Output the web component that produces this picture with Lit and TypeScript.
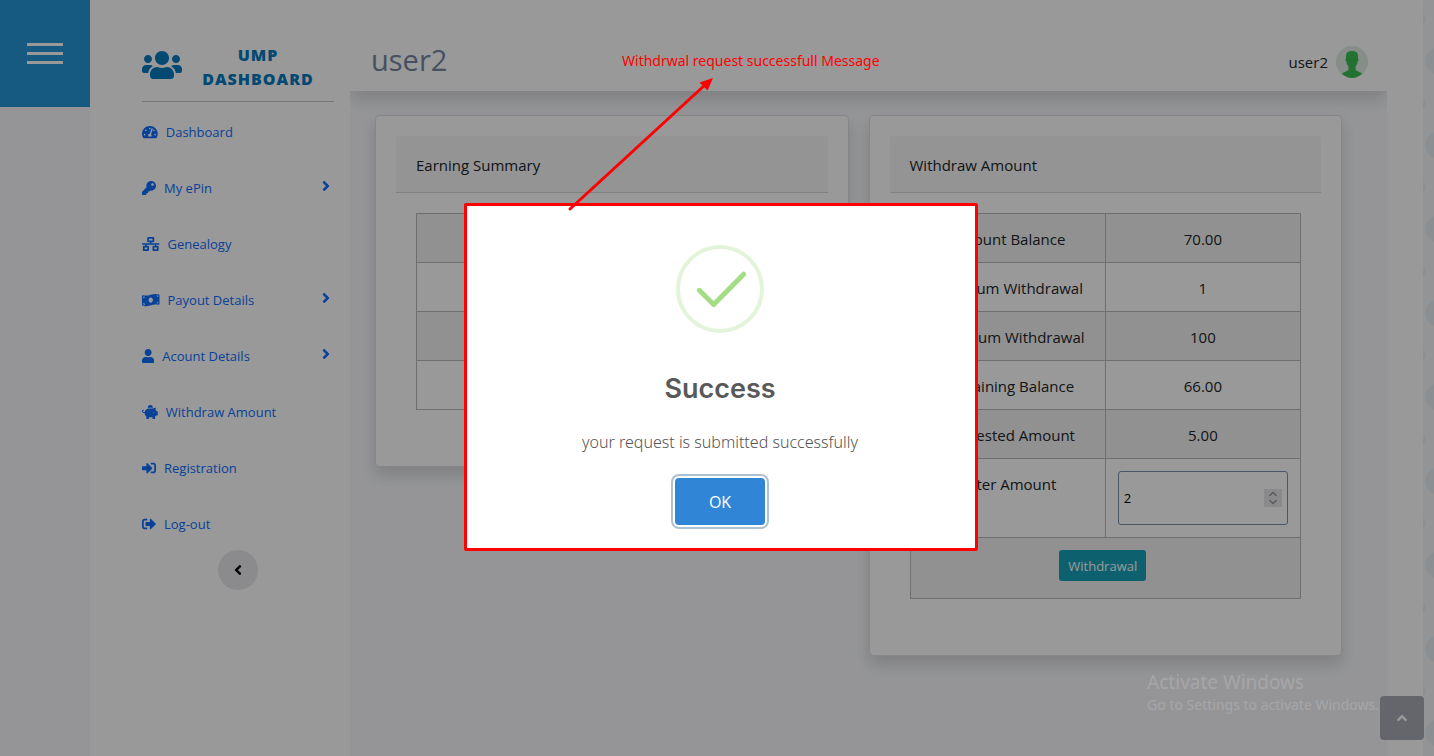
import { LitElement, html, css, svg } from "lit";
import { customElement, property, state } from "lit/decorators.js";

interface IconDef {
  w: number;
  d: string;
}

const ICONS: Record<string, IconDef> = {
  users: { w: 640, d: "M96 224c35.3 0 64-28.7 64-64s-28.7-64-64-64-64 28.7-64 64 28.7 64 64 64zm448 0c35.3 0 64-28.7 64-64s-28.7-64-64-64-64 28.7-64 64 28.7 64 64 64zm32 32h-64c-17.6 0-33.5 7.1-45.1 18.6 40.3 22.1 68.9 62 75.1 109.4h66c17.7 0 32-14.3 32-32v-32c0-35.3-28.7-64-64-64zm-256 0c61.9 0 112-50.1 112-112S381.9 32 320 32 208 82.1 208 144s50.1 112 112 112zm76.8 32h-8.3c-20.8 10-43.9 16-68.5 16s-47.6-6-68.5-16h-8.3C179.6 288 128 339.6 128 403.2V432c0 26.5 21.5 48 48 48h288c26.5 0 48-21.5 48-48v-28.8c0-63.6-51.6-115.2-115.2-115.2zm-223.7-13.4C161.5 263.1 145.6 256 128 256H64c-35.3 0-64 28.7-64 64v32c0 17.7 14.3 32 32 32h65.9c6.3-47.4 34.9-87.3 75.2-109.4z" },
  gauge: { w: 576, d: "M288 32C128.94 32 0 160.94 0 320c0 52.8 14.25 102.26 39.06 144.8 5.61 9.62 16.3 15.2 27.44 15.2h443c11.14 0 21.83-5.58 27.44-15.2C561.75 422.26 576 372.8 576 320c0-159.06-128.94-288-288-288zm0 64c14.71 0 26.58 10.13 30.32 23.65-1.11 2.26-2.64 4.23-3.45 6.67l-9.22 27.67c-5.13 3.49-10.97 6.01-17.64 6.01-17.67 0-32-14.33-32-32S270.33 96 288 96zM96 384c-17.67 0-32-14.33-32-32s14.33-32 32-32 32 14.33 32 32-14.33 32-32 32zm48-160c-17.67 0-32-14.33-32-32s14.33-32 32-32 32 14.33 32 32-14.33 32-32 32zm246.77-72.41l-61.33 184C343.13 347.33 352 364.54 352 384c0 11.72-3.38 22.55-8.88 32H232.88c-5.5-9.45-8.88-20.28-8.88-32 0-33.94 26.5-61.43 59.9-63.59l61.34-184.01c4.17-12.56 17.73-19.45 30.36-15.17 12.57 4.19 19.35 17.79 15.17 30.36zm14.66 57.2l15.52-46.55c3.47-1.29 7.13-2.23 11.05-2.23 17.67 0 32 14.33 32 32s-14.33 32-32 32c-11.38-.01-20.89-6.28-26.57-15.22zM480 384c-17.67 0-32-14.33-32-32s14.33-32 32-32 32 14.33 32 32-14.33 32-32 32z" },
  key: { w: 512, d: "M512 176.001C512 273.203 433.202 352 336 352c-11.22 0-22.19-1.062-32.827-3.069l-24.012 27.014A23.999 23.999 0 0 1 261.223 384H224v40c0 13.255-10.745 24-24 24h-40v40c0 13.255-10.745 24-24 24H24c-13.255 0-24-10.745-24-24v-78.059c0-6.365 2.529-12.47 7.029-16.971l161.802-161.802C163.108 213.814 160 195.271 160 176 160 78.798 238.797.001 335.999 0 433.488-.001 512 78.511 512 176.001zM336 128c0 26.51 21.49 48 48 48s48-21.49 48-48-21.49-48-48-48-48 21.49-48 48z" },
  network: { w: 640, d: "M640 264v-16c0-8.84-7.16-16-16-16H344v-40h72c17.67 0 32-14.33 32-32V32c0-17.67-14.33-32-32-32H224c-17.67 0-32 14.33-32 32v128c0 17.67 14.33 32 32 32h72v40H16c-8.84 0-16 7.16-16 16v16c0 8.84 7.16 16 16 16h104v40H64c-17.67 0-32 14.33-32 32v128c0 17.67 14.33 32 32 32h160c17.67 0 32-14.33 32-32V352c0-17.67-14.33-32-32-32h-56v-40h304v40h-56c-17.67 0-32 14.33-32 32v128c0 17.67 14.33 32 32 32h160c17.67 0 32-14.33 32-32V352c0-17.67-14.33-32-32-32h-56v-40h104c8.84 0 16-7.16 16-16zM256 128V64h128v64H256zm-64 320H96v-64h96v64zm352 0h-96v-64h96v64z" },
  money: { w: 640, d: "M621.16 54.46C582.37 38.19 543.55 32 504.75 32c-123.17-.01-246.33 62.34-369.5 62.34-30.89 0-61.76-3.92-92.65-13.72-3.47-1.1-6.95-1.62-10.35-1.62C15.04 79 0 92.32 0 110.81v317.26c0 12.63 7.23 24.6 18.84 29.46C57.63 473.81 96.45 480 135.25 480c123.17 0 246.34-62.35 369.51-62.35 30.89 0 61.76 3.92 92.65 13.72 3.47 1.1 6.95 1.62 10.35 1.62 17.21 0 32.25-13.32 32.25-31.81V83.93c-.01-12.64-7.24-24.6-18.85-29.47zM48 132.22c20.12 5.04 41.12 7.57 62.72 8.93C104.84 170.54 79 192.69 48 192.69v-60.47zm0 285v-47.78c34.37 0 62.18 27.27 63.71 61.4-22.53-1.81-43.59-6.31-63.71-13.62zM320 352c-44.19 0-80-42.99-80-96 0-53.02 35.82-96 80-96s80 42.98 80 96c0 53.03-35.83 96-80 96zm272 27.78c-17.52-4.39-35.71-6.85-54.32-8.44 5.87-26.08 27.5-45.88 54.32-49.28v57.72zm0-236.11c-30.89-3.91-54.86-29.7-55.81-61.55 19.54 2.17 38.09 6.23 55.81 12.66v48.89z" },
  user: { w: 448, d: "M224 256c70.7 0 128-57.3 128-128S294.7 0 224 0 96 57.3 96 128s57.3 128 128 128zm89.6 32h-16.7c-22.2 10.2-46.9 16-72.9 16s-50.6-5.8-72.9-16h-16.7C60.2 288 0 348.2 0 422.4V464c0 26.5 21.5 48 48 48h352c26.5 0 48-21.5 48-48v-41.6c0-74.2-60.2-134.4-134.4-134.4z" },
  piggy: { w: 576, d: "M560 224h-29.5c-8.8-20-21.6-37.7-37.4-52.5L512 96h-32c-29.4 0-55.4 13.5-73 34.3-7.6-1.1-15.1-2.3-23-2.3H256c-77.4 0-141.9 55-156.8 128H56c-14.8 0-26.5-13.5-23.5-28.8C34.7 215.8 45.4 208 57 208h1c3.3 0 6-2.7 6-6v-20c0-3.3-2.7-6-6-6-28.5 0-53.9 20.4-57.5 48.6C-3.9 258.8 22.7 288 56 288h40c0 52.2 25.4 98.1 64 127.3V496c0 8.8 7.2 16 16 16h64c8.8 0 16-7.2 16-16v-48h128v48c0 8.8 7.2 16 16 16h64c8.8 0 16-7.2 16-16v-80.7c11.8-8.9 22.3-19.4 31.3-31.3H560c8.8 0 16-7.2 16-16V240c0-8.8-7.2-16-16-16zm-128 64c-8.8 0-16-7.2-16-16s7.2-16 16-16 16 7.2 16 16-7.2 16-16 16zM256 96h128c5.4 0 10.7.4 15.9.8 0-.3.1-.5.1-.8 0-53-43-96-96-96s-96 43-96 96c0 2.1.5 4.1.6 6.2 15.2-3.9 31-6.2 47.4-6.2z" },
  signin: { w: 512, d: "M416 448h-84c-6.6 0-12-5.4-12-12v-40c0-6.6 5.4-12 12-12h84c17.7 0 32-14.3 32-32V160c0-17.7-14.3-32-32-32h-84c-6.6 0-12-5.4-12-12V76c0-6.6 5.4-12 12-12h84c53 0 96 43 96 96v192c0 53-43 96-96 96zm-47-201L201 79c-15-15-41-4.5-41 17v96H24c-13.3 0-24 10.7-24 24v96c0 13.3 10.7 24 24 24h136v96c0 21.5 26 32 41 17l168-168c9.3-9.4 9.3-24.6 0-34z" },
  signout: { w: 512, d: "M497 273L329 441c-15 15-41 4.5-41-17v-96H152c-13.3 0-24-10.7-24-24v-96c0-13.3 10.7-24 24-24h136V88c0-21.4 25.9-32 41-17l168 168c9.3 9.4 9.3 24.6 0 34zM192 436v-40c0-6.6-5.4-12-12-12H96c-17.7 0-32-14.3-32-32V160c0-17.7 14.3-32 32-32h84c6.6 0 12-5.4 12-12V76c0-6.6-5.4-12-12-12H96c-53 0-96 43-96 96v192c0 53 43 96 96 96h84c6.6 0 12-5.4 12-12z" },
  angle: { w: 256, d: "M224.3 273l-136 136c-9.4 9.4-24.6 9.4-33.9 0l-22.6-22.6c-9.4-9.4-9.4-24.6 0-33.9l96.4-96.4-96.4-96.4c-9.4-9.4-9.4-24.6 0-33.9L54.3 103c9.4-9.4 24.6-9.4 33.9 0l136 136c9.5 9.4 9.5 24.6.1 34z" },
};

@customElement("fa-icon")
class FaIcon extends LitElement {
  @property() name = "";

  static styles = css`
    :host {
      display: inline-flex;
      flex: none;
    }
    .glyph {
      display: block;
      height: 1em;
      width: auto;
      fill: currentColor;
    }
  `;

  render() {
    const icon = ICONS[this.name];
    return html`<svg class="glyph" viewBox="0 0 ${icon.w} 512" aria-hidden="true">
      ${svg`<path d=${icon.d}></path>`}
    </svg>`;
  }
}

const NAV = [
  { icon: "gauge", label: "Dashboard", more: false },
  { icon: "key", label: "My ePin", more: true },
  { icon: "network", label: "Genealogy", more: false },
  { icon: "money", label: "Payout Details", more: true },
  { icon: "user", label: "Acount Details", more: true },
  { icon: "piggy", label: "Withdraw Amount", more: false },
  { icon: "signin", label: "Registration", more: false },
  { icon: "signout", label: "Log-out", more: false },
];

@customElement("side-nav")
class SideNav extends LitElement {
  static styles = css`
    :host {
      display: block;
      box-sizing: border-box;
      background: #fff;
      padding: 43px 16px 24px 52px;
    }
    .brand {
      display: flex;
      align-items: center;
      padding-bottom: 10px;
      border-bottom: 1px solid #c8c8c8;
      color: #067bbd;
      text-decoration: none;
    }
    .logo {
      font-size: 32px;
      margin-bottom: 4px;
    }
    .title {
      flex: 1;
      text-align: center;
      font-size: 16px;
      line-height: 24px;
      font-weight: 800;
      letter-spacing: 1px;
    }
    .menu {
      list-style: none;
      margin: 0;
      padding: 18px 0 0;
      display: grid;
      gap: 32px;
    }
    .link {
      display: flex;
      align-items: center;
      gap: 8px;
      height: 24px;
      font-size: 14px;
      color: #0d6efd;
      text-decoration: none;
    }
    .label {
      flex: 1;
      font-size: 13px;
    }
    .more {
      font-size: 16px;
      padding: 0 4px 4px 0;
    }
    .collapse {
      display: flex;
      align-items: center;
      justify-content: center;
      width: 40px;
      height: 40px;
      margin: 14px auto 0;
      padding: 0;
      border: 0;
      border-radius: 50%;
      background: #e8e8eb;
      color: #000;
      font-size: 16px;
    }
    .left {
      transform: rotate(180deg);
    }
  `;

  render() {
    return html`
      <a class="brand" href="#">
        <fa-icon class="logo" name="users"></fa-icon>
        <span class="title">UMP<br />DASHBOARD</span>
      </a>
      <ul class="menu">
        ${NAV.map(
          (item) => html`<li>
            <a class="link" href="#">
              <fa-icon name=${item.icon}></fa-icon>
              <span class="label">${item.label}</span>
              ${item.more ? html`<fa-icon class="more" name="angle"></fa-icon>` : null}
            </a>
          </li>`
        )}
      </ul>
      <button class="collapse" type="button" aria-label="Collapse menu">
        <fa-icon class="left" name="angle"></fa-icon>
      </button>
    `;
  }
}

@customElement("panel-card")
class PanelCard extends LitElement {
  @property() heading = "";

  static styles = css`
    :host {
      display: block;
      box-sizing: border-box;
      padding: 20px;
      background: #fff;
      border: 1px solid #dfe0e4;
      border-radius: 4px;
      box-shadow: 0 8px 16px rgba(0, 0, 0, 0.15);
    }
    .head {
      margin: 0;
      padding: 17px 20px 15px;
      font-size: 15px;
      line-height: 24px;
      font-weight: 400;
      background: rgba(0, 0, 0, 0.03);
      border-bottom: 1px solid #d8d8d8;
      border-radius: 3px 3px 0 0;
    }
    .body {
      padding: 20px 20px 36px;
    }
  `;

  render() {
    return html`<h2 class="head">${this.heading}</h2>
      <div class="body"><slot></slot></div>`;
  }
}

@customElement("success-dialog")
class SuccessDialog extends LitElement {
  static styles = css`
    :host {
      display: block;
    }
    .dialog {
      box-sizing: border-box;
      width: 514px;
      max-width: 100%;
      padding: 39px 20px 23px 18px;
      display: flex;
      flex-direction: column;
      align-items: center;
      text-align: center;
      background: #fff;
      border: 3px solid #f00;
      border-radius: 2px;
    }
    .mark {
      width: 88px;
      height: 88px;
    }
    .title {
      margin: 36px 0 0;
      font: 600 27px/40px Inter, sans-serif;
      color: #595959;
    }
    .text {
      margin: 20px 0 0;
      font-family: "Noto Sans", sans-serif;
      font-size: 16px;
      line-height: 26px;
      font-weight: 300;
      color: #545454;
    }
    .ok {
      margin-top: 23px;
      width: 90px;
      height: 47px;
      border: 0;
      border-radius: 4px;
      background: #3085d6;
      color: #fff;
      font: inherit;
      font-size: 16px;
      box-shadow: 0 0 0 2px #fff, 0 0 0 4px rgba(50, 100, 150, 0.4);
      outline: none;
    }
  `;

  private close() {
    this.dispatchEvent(new CustomEvent("dismiss", { bubbles: true, composed: true }));
  }

  render() {
    return html`<section class="dialog" role="dialog" aria-modal="true" aria-labelledby="t">
      <svg class="mark" viewBox="0 0 88 88" fill="none" aria-hidden="true">
        <circle cx="44" cy="44" r="42" stroke="#a5dc86" stroke-opacity="0.3" stroke-width="4" />
        <path d="M23.3 45.3L37.7 59.6L67.7 29.2" stroke="#a5dc86" stroke-width="5" stroke-linecap="round" stroke-linejoin="round" />
      </svg>
      <h1 class="title" id="t">Success</h1>
      <p class="text">your request is submitted successfully</p>
      <button class="ok" type="button" @click=${this.close}>OK</button>
    </section>`;
  }
}

const BALANCES = [
  ["Account Balance", "70.00"],
  ["Minimum Withdrawal", "1"],
  ["Maximum Withdrawal", "100"],
  ["Remaining Balance", "66.00"],
  ["Requested Amount", "5.00"],
];

@customElement("app-root")
class AppRoot extends LitElement {
  @state() private open = true;

  static styles = css`
    :host {
      display: block;
      position: relative;
      overflow: hidden;
      min-height: 100vh;
      font-family: "Open Sans", "Noto Sans", sans-serif;
      font-size: 15px;
      line-height: 24px;
      color: #212529;
    }
    .page {
      display: grid;
      grid-template-columns: 90px 260px minmax(0, 1fr) 36px 11px;
      min-height: 100vh;
      background: #f8f9fc;
    }
    .burger {
      display: flex;
      flex-direction: column;
      align-items: center;
      justify-content: center;
      gap: 6px;
      width: 100%;
      height: 107px;
      padding: 0;
      border: 0;
      background: #2696d9;
    }
    .bar {
      width: 36px;
      height: 3px;
      background: #fff;
    }
    .main {
      overflow: hidden;
    }
    .gutter {
      background: #fff;
    }
    .pattern {
      background-color: #f4f7fb;
      background-image: radial-gradient(circle at 16px 61px, #e5eef3 13px, transparent 14px),
        radial-gradient(circle at -4px 19px, #e9edf3 6px, transparent 7px);
      background-size: 30px 84px;
    }
    .topbar {
      display: flex;
      align-items: center;
      justify-content: space-between;
      box-sizing: border-box;
      height: 91px;
      padding: 32px 19px 0 21px;
      background: #fff;
      box-shadow: 0 8px 16px rgba(0, 0, 0, 0.15);
    }
    .who {
      margin: 0;
      padding-bottom: 4px;
      font-size: 29px;
      line-height: 36px;
      font-weight: 400;
      color: #76869f;
    }
    .account {
      display: flex;
      align-items: center;
      gap: 8px;
      color: #212529;
      text-decoration: none;
    }
    .avatar {
      display: block;
      width: 32px;
      height: 32px;
    }
    .cards {
      display: grid;
      grid-template-columns: 1fr 1fr;
      align-items: start;
      gap: 20px;
      padding: 24px 45px 80px 25px;
    }
    .table {
      width: 100%;
      table-layout: fixed;
      border-collapse: collapse;
      text-align: center;
    }
    .row:nth-child(odd) {
      background: rgba(0, 0, 0, 0.05);
    }
    .cell {
      height: 24px;
      padding: 13px 12px 11px;
      border: 1px solid #b9b9b9;
      font-weight: 400;
      vertical-align: top;
    }
    .entry {
      padding: 12px;
    }
    .amount {
      position: relative;
      display: flex;
    }
    .field {
      box-sizing: border-box;
      width: 100%;
      height: 54px;
      padding: 2px 5px;
      border: 1px solid #7c93a8;
      border-radius: 3px;
      background: #fff;
      color: #000;
      font: inherit;
      font-size: 13px;
      appearance: textfield;
    }
    .field::-webkit-inner-spin-button {
      appearance: none;
      margin: 0;
    }
    .spin {
      position: absolute;
      right: 6px;
      top: 18px;
      width: 18px;
      height: 18px;
      background: #e6e6eb;
    }
    .actions {
      padding: 12px 12px 17px;
    }
    .submit {
      display: inline-block;
      vertical-align: top;
      height: 31px;
      margin-right: 5px;
      padding: 0 9px;
      border: 0;
      border-radius: 3px;
      background: #17a2b8;
      color: #fff;
      font: inherit;
      font-size: 13px;
    }
    .top {
      position: absolute;
      right: 10px;
      bottom: 16px;
      width: 44px;
      height: 44px;
      display: flex;
      align-items: center;
      justify-content: center;
      border-radius: 4px;
      background: #a8aab2;
      color: #fff;
      font-size: 16px;
    }
    .up {
      transform: rotate(-90deg);
    }
    .overlay {
      position: absolute;
      inset: 0;
      display: flex;
      align-items: center;
      justify-content: center;
      padding: 0 0 2px 8px;
      background: rgba(0, 0, 0, 0.4);
    }
    .watermark {
      position: absolute;
      right: 55px;
      bottom: 40px;
      color: rgba(255, 255, 255, 0.18);
      font-family: "Noto Sans", sans-serif;
      font-size: 14px;
      line-height: 22px;
    }
    .wm-title {
      font-size: 19px;
      line-height: 24px;
    }
    .note {
      position: absolute;
      left: 622px;
      top: 49px;
      color: #f00;
      font-family: "Noto Sans", sans-serif;
      font-size: 14px;
    }
    .arrow {
      position: absolute;
      left: 560px;
      top: 70px;
      width: 160px;
      height: 145px;
    }
  `;

  render() {
    return html`
      <div class="page">
        <div>
          <button class="burger" type="button" aria-label="Menu">
            <span class="bar"></span><span class="bar"></span><span class="bar"></span>
          </button>
        </div>
        <side-nav></side-nav>
        <main class="main">
          <header class="topbar">
            <h1 class="who">user2</h1>
            <a class="account" href="#">
              <span>user2</span>
              <svg class="avatar" viewBox="0 0 32 32" aria-hidden="true">
                <circle cx="16" cy="16" r="16" fill="#e1ebe4" />
                <path d="M16 5c4 0 6 1.5 6 4.5v3c.8.5.6 2.5-.3 3.3-.3 2-1.2 3.5-2.2 4.5v2.500c0 1.400 1 2 2.600 2.600 1.600.6 3 1.100 4.100 2.300A16 16 0 0 1 16 32 16 16 0 0 1 5.800 27.700c1.100-1.200 2.500-1.700 4.100-2.300 1.600-.6 2.600-1.200 2.600-2.600v-2.500c-1-1-1.900-2.500-2.200-4.500-.9-.8-1.100-2.800-.3-3.300v-3C10 6.500 12 5 16 5z" fill="#3dbf52" />
              </svg>
            </a>
          </header>
          <div class="cards">
            <panel-card heading="Earning Summary">
              <table class="table" aria-label="Earning Summary">
                <tbody>
                  ${[0, 1, 2, 3].map(
                    () => html`<tr class="row"><td class="cell"></td><td class="cell"></td></tr>`
                  )}
                </tbody>
              </table>
            </panel-card>
            <panel-card heading="Withdraw Amount">
              <table class="table">
                <tbody>
                  ${BALANCES.map(
                    ([name, value]) => html`<tr class="row">
                      <th class="cell" scope="row">${name}</th>
                      <td class="cell">${value}</td>
                    </tr>`
                  )}
                  <tr class="row">
                    <th class="cell" scope="row"><label for="amount">Enter Amount</label></th>
                    <td class="cell entry">
                      <div class="amount">
                        <input class="field" id="amount" type="number" value="2" />
                        <svg class="spin" viewBox="0 0 18 18" fill="none" stroke="#92929c" stroke-width="1.5" aria-hidden="true">
                          <path d="M5.5 6.7L9 3.5L12.5 6.7M5.5 11.3L9 14.5L12.5 11.3" />
                        </svg>
                      </div>
                    </td>
                  </tr>
                  <tr class="row">
                    <td class="cell actions" colspan="2">
                      <button class="submit" type="button">Withdrawal</button>
                    </td>
                  </tr>
                </tbody>
              </table>
            </panel-card>
          </div>
        </main>
        <div class="gutter"></div>
        <div class="pattern"></div>
      </div>
      <a class="top" href="#" aria-label="Back to top"><fa-icon class="up" name="angle"></fa-icon></a>
      ${this.open
        ? html`<div class="overlay">
            <success-dialog @dismiss=${() => (this.open = false)}></success-dialog>
          </div>`
        : null}
      <div class="watermark">
        <div class="wm-title">Activate Windows</div>
        <div>Go to Settings to activate Windows.</div>
      </div>
      <div class="note">Withdrwal request successfull Message</div>
      <svg class="arrow" viewBox="0 0 160 145" aria-hidden="true">
        <path d="M10 139L146 14" stroke="#f00" stroke-width="3" stroke-linecap="round" />
        <path d="M153 8L147.5 20.5L139.5 12.5Z" fill="#f00" />
      </svg>
    `;
  }
}
